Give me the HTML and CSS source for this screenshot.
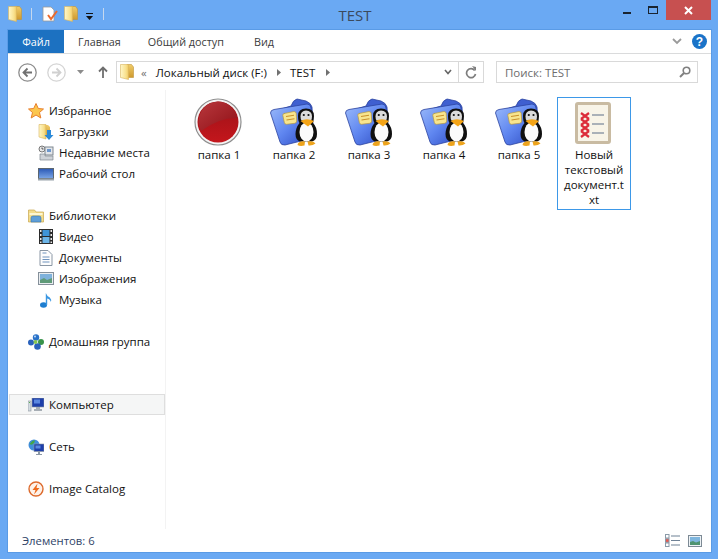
FILE: index.html
```html
<!DOCTYPE html>
<html lang="ru">
<head>
<meta charset="utf-8">
<title>TEST</title>
<link rel="stylesheet" href="styles.css">
</head>
<body>
<svg class="defs" width="0" height="0" aria-hidden="true">
  <defs>
    <linearGradient id="gFolder" x1="0" y1="0" x2="1" y2="0"><stop offset="0" stop-color="#fff7c8"/><stop offset=".7" stop-color="#f8e08c"/><stop offset="1" stop-color="#efc862"/></linearGradient>
    <linearGradient id="gFolderR" x1="0" y1="0" x2="0" y2="1"><stop offset="0" stop-color="#f0cc6a"/><stop offset="1" stop-color="#cf9a2e"/></linearGradient>
    <linearGradient id="gBlue" x1="0" y1="0" x2="1" y2="1"><stop offset="0" stop-color="#9dbcfa"/><stop offset=".5" stop-color="#5f86f0"/><stop offset="1" stop-color="#2c49c0"/></linearGradient>
    <linearGradient id="gRed" x1="0" y1="0" x2="0" y2="1"><stop offset="0" stop-color="#9c1218"/><stop offset="1" stop-color="#c4161c"/></linearGradient>
    <linearGradient id="gRedHi" x1="0" y1="0" x2="1" y2="1"><stop offset="0" stop-color="#b9383d"/><stop offset="1" stop-color="#8e1016"/></linearGradient>
    <linearGradient id="gSmallBlue" x1="0" y1="0" x2="0" y2="1"><stop offset="0" stop-color="#2a58b5"/><stop offset="1" stop-color="#7ba6e6"/></linearGradient>
    <symbol id="winfolder" viewBox="0 0 14 16">
      <path d="M7 .5h4.500l2 2.500v10.500H7z" fill="url(#gFolderR)" stroke="#c0933a" stroke-width=".6"/>
      <path d="M.5.500H8.500V15.500L.5 13.500z" fill="url(#gFolder)" stroke="#d8b45c" stroke-width=".6"/>
    </symbol>
    <symbol id="penguinfolder" viewBox="0 0 48 48">
      <path d="M3 14L22 8Q24 2 28 1L37 3Q42 5 43 9L44 28L14 42z" fill="#3f5fd0" stroke="#2b429f" stroke-width=".8"/>
      <path d="M1.500 15Q1.500 12 5 11.500L38 6Q42 6 42 10L43 37Q43 40 40 41L16 47Q12 47.500 11 44z" fill="url(#gBlue)" stroke="#2b429f" stroke-width=".8"/>
      <path d="M15 15.500l10-2q2 0 2.200 2l.5 7.500q0 2-2 2.300l-8.200 1q-2 0-2.200-2l-1.500-7q0-2 1.700-1.800z" fill="#f7e58f" stroke="#b99a3c" stroke-width=".7"/>
      <path d="M17 18.500l8-1.200M17.500 22l8-1.200" stroke="#c9912c" stroke-width="1.100"/>
      <path d="M37 10.500Q29 10.500 29 18Q29 23 30.500 25Q26.500 30 26.500 36Q26.500 42 31 43.500H43Q48 42 48 36Q48 29 44 25Q45 20 45 18Q45 10.500 37 10.500z" fill="#101010"/>
      <ellipse cx="37.500" cy="34" rx="7" ry="9.500" fill="#fbfbfb"/>
      <path d="M37 12.500Q31.500 13 31.500 18.500Q31.500 21 32.500 22.500H42Q43 21 43 18.500Q43 13 37 12.500z" fill="#dcdcdc"/>
      <circle cx="34.800" cy="17" r="1.100" fill="#111"/><circle cx="39.500" cy="17" r="1.100" fill="#111"/>
      <path d="M31.500 23Q37.500 19.500 45 23L39 28.500z" fill="#f4a416"/>
      <path d="M28.500 47Q29.500 42.500 36 43.500L35.500 47.500Q31 48.500 28.500 47zM38.500 43.500Q44.500 42.500 46.500 45.500Q43.500 48 39.500 47.500z" fill="#eea41c"/>
    </symbol>
  </defs>
</svg>

<div class="window">
  <header class="titlebar">
    <div class="quick">
      <svg width="14" height="16"><use href="#winfolder"/></svg>
      <span class="qa-sep"></span>
      <svg class="qa-doc" width="16" height="16" viewBox="0 0 16 16"><path d="M1 1h8l3 3v11H1z" fill="#fff" stroke="#9a9a9a" stroke-width=".8"/><path d="M6 9l3 4 6-8" fill="none" stroke="#ea6a2c" stroke-width="2"/></svg>
      <svg class="qa-folder2" width="14" height="16"><use href="#winfolder"/></svg>
      <svg class="qa-down" width="7" height="7" viewBox="0 0 7 7"><path d="M0 0h7v1H0zM0 3h7L3.500 7z" fill="#111"/></svg>
      <span class="qa-sep qa-sep2"></span>
    </div>
    <div class="title">TEST</div>
    <div class="caption">
      <span class="cap-btn"><span class="cap-min"></span></span>
      <span class="cap-btn"><span class="cap-max"></span></span>
      <span class="cap-close"><svg width="9" height="9" viewBox="0 0 9 9"><path d="M1 1l7 7M8 1L1 8" stroke="#fff" stroke-width="2"/></svg></span>
    </div>
  </header>

  <main class="frame">
    <nav class="ribbon">
      <span class="tab tab-file">Файл</span>
      <span class="tab tab-home">Главная</span>
      <span class="tab tab-share">Общий доступ</span>
      <span class="tab tab-view">Вид</span>
      <span class="ribbon-end">
        <svg width="10" height="7" viewBox="0 0 10 7"><path d="M1 1l4 4 4-4" fill="none" stroke="#9a9a9a" stroke-width="1.800"/></svg>
        <svg width="15" height="15" viewBox="0 0 15 15"><circle cx="7.500" cy="7.500" r="7.500" fill="#1a73c8"/><text x="7.500" y="12" text-anchor="middle" class="help-q">?</text></svg>
      </span>
    </nav>

    <div class="navbar">
      <svg width="19" height="19" viewBox="0 0 19 19"><circle cx="9.500" cy="9.500" r="8.700" fill="#fff" stroke="#8c8c8c" stroke-width="1.300"/><path d="M14 9.500H6M9.500 5.500l-4 4 4 4" fill="none" stroke="#707070" stroke-width="1.800"/></svg>
      <svg class="nav-fwd" width="19" height="19" viewBox="0 0 19 19"><circle cx="9.500" cy="9.500" r="8.700" fill="#fff" stroke="#d4d4d4" stroke-width="1.300"/><path d="M5 9.500h8M9.500 5.500l4 4-4 4" fill="none" stroke="#d0d0d0" stroke-width="1.800"/></svg>
      <svg class="nav-drop" width="7" height="4" viewBox="0 0 7 4"><path d="M0 0h7L3.500 4z" fill="#8c8c8c"/></svg>
      <svg class="nav-up" width="10" height="12" viewBox="0 0 10 12"><path d="M5 12V2M1 5.500L5 1.500l4 4" fill="none" stroke="#6f6f6f" stroke-width="1.800"/></svg>
      <div class="address">
        <svg width="14" height="16"><use href="#winfolder"/></svg>
        <span class="addr-more">«</span>
        <span class="addr-text">Локальный диск (F:)</span>
        <svg class="crumb" width="4" height="7" viewBox="0 0 4 7"><path d="M0 0l4 3.500L0 7z" fill="#707070"/></svg>
        <span class="addr-text addr-test">TEST</span>
        <svg class="crumb" width="4" height="7" viewBox="0 0 4 7"><path d="M0 0l4 3.500L0 7z" fill="#707070"/></svg>
        <span class="addr-spring"></span>
        <svg class="addr-chev" width="8" height="6" viewBox="0 0 8 6"><path d="M1 1l3 3.500L7 1" fill="none" stroke="#666" stroke-width="1.600"/></svg>
        <span class="addr-refresh">
          <svg width="12" height="13" viewBox="0 0 12 13"><path d="M9.700 4.500A4.500 4.500 0 1 0 10.500 8" fill="none" stroke="#7d7d7d" stroke-width="1.700"/><path d="M7 0l4 1v4z" fill="#7d7d7d"/></svg>
        </span>
      </div>
      <div class="search">
        <span class="search-text">Поиск: TEST</span>
        <svg width="12" height="12" viewBox="0 0 12 12"><circle cx="7.500" cy="4.500" r="3.300" fill="none" stroke="#808080" stroke-width="1.600"/><path d="M5 7l-4 4" stroke="#808080" stroke-width="2"/></svg>
      </div>
    </div>

    <div class="body">
      <aside class="sidebar">
        <section class="group">
          <div class="row root">
            <svg width="16" height="16" viewBox="0 0 16 16"><path d="M8 .5l2.300 5 5.200.5-4 3.500 1.300 5.500L8 12l-4.800 3 1.300-5.500-4-3.500 5.200-.5z" fill="#fbc64e" stroke="#e87f2c"/></svg>
            <span>Избранное</span>
          </div>
          <div class="row child">
            <svg width="16" height="16" viewBox="0 0 16 16"><path d="M6 1h4l2 2v10H6z" fill="url(#gFolderR)"/><path d="M1 .5h7V15l-7-2z" fill="url(#gFolder)" stroke="#d8b45c" stroke-width=".6"/><path d="M9 6h4v5h2.500L11 16l-4.500-5H9z" fill="#2c8ad8"/></svg>
            <span>Загрузки</span>
          </div>
          <div class="row child">
            <svg width="16" height="16" viewBox="0 0 16 16"><circle cx="4" cy="4" r="3" fill="#e8e8e8" stroke="#777"/><path d="M4 2.500V4h1.500" stroke="#555" fill="none"/><rect x="7" y="2" width="8" height="8" fill="#e3e6ea" stroke="#7f8790"/><rect x="9" y="4" width="4" height="3" fill="#6d97cc"/><path d="M2 9h5v2h8v4H2z" fill="#cfd3d8" stroke="#7f8790" stroke-width=".7"/></svg>
            <span>Недавние места</span>
          </div>
          <div class="row child">
            <svg width="16" height="14" viewBox="0 0 16 14"><rect x=".5" y="1.500" width="15" height="10" fill="url(#gSmallBlue)" stroke="#5b6670"/><rect y="11.500" width="16" height="2" fill="#9aa3ab"/></svg>
            <span>Рабочий стол</span>
          </div>
        </section>

        <section class="group">
          <div class="row root">
            <svg width="16" height="16" viewBox="0 0 16 16"><path d="M.5 2h6l1.500 2h7.500v10H.5z" fill="#f4dd8c" stroke="#c8a64e" stroke-width=".7"/><path d="M1.500 5h13v2h-13z" fill="#fff7d2"/><path d="M3 14V10q0-2 2-2h6q2 0 2 2v4z" fill="#5f9fd8" stroke="#3a75ae" stroke-width=".6"/></svg>
            <span>Библиотеки</span>
          </div>
          <div class="row child">
            <svg width="14" height="15" viewBox="0 0 14 15"><rect width="14" height="15" fill="#2b2b2b"/><path d="M3.500 1h7v6h-7z" fill="#3f95d8"/><path d="M3.500 8h7v6h-7z" fill="#6cb5e8"/><path d="M1 1h1.500v2H1zM1 5h1.500v2H1zM1 9h1.500v2H1zM1 12.500h1.500v1.500H1zM11.500 1H13v2h-1.500zM11.500 5H13v2h-1.500zM11.500 9H13v2h-1.500zM11.500 12.500H13v1.500h-1.500z" fill="#e9e9e9"/></svg>
            <span>Видео</span>
          </div>
          <div class="row child">
            <svg width="13" height="16" viewBox="0 0 13 16"><path d="M.5.500h8l4 4v11H.5z" fill="#fdfdfd" stroke="#8a97a5"/><path d="M3 3h4M3 7h7M3 9.500h7M3 12h7" stroke="#6f93bd"/></svg>
            <span>Документы</span>
          </div>
          <div class="row child">
            <svg width="16" height="13" viewBox="0 0 16 13"><rect x=".5" y=".5" width="15" height="12" fill="#e9edf0" stroke="#85909a"/><rect x="2" y="2" width="12" height="9" fill="#7fb2dc"/><path d="M2 11V8l4-2 3 2 5-2v5z" fill="#5f9a78"/></svg>
            <span>Изображения</span>
          </div>
          <div class="row child">
            <svg width="13" height="16" viewBox="0 0 13 16"><ellipse cx="4" cy="13" rx="3.500" ry="2.700" fill="#1e7ed0"/><path d="M6.300 13V1q1 3 4 4.500 2 2 1 4.500-.5-3-3.600-3.500V13z" fill="#3a97e2"/></svg>
            <span>Музыка</span>
          </div>
        </section>

        <section class="group group-wide">
          <div class="row root">
            <svg width="16" height="16" viewBox="0 0 16 16"><circle cx="8" cy="3.500" r="3.200" fill="#2a72c8"/><circle cx="3" cy="8.500" r="3" fill="#2a62bc"/><circle cx="13" cy="8" r="3" fill="#39934a"/><circle cx="9.500" cy="12.500" r="3.300" fill="#2a62bc"/><circle cx="7.500" cy="8" r="2" fill="#86c552"/><circle cx="7" cy="2.500" r="1" fill="#bcd8f7"/></svg>
            <span>Домашняя группа</span>
          </div>
        </section>

        <section class="group">
          <div class="row root row-sel">
            <svg width="16" height="14" viewBox="0 0 16 14"><rect y="3" width="3" height="10" fill="#d3dbe1" stroke="#8a949d" stroke-width=".6"/><rect x="1" y="4" width="1" height="1" fill="#56b04a"/><rect x="4" y="0" width="12" height="9" fill="#1e3faa" stroke="#8a949d" stroke-width=".6"/><rect x="6" y="1.500" width="6" height="4" fill="#5b87e0"/><path d="M8 9h4v2h2v2H6v-2h2z" fill="#a7aeb5"/></svg>
            <span>Компьютер</span>
          </div>
        </section>

        <section class="group">
          <div class="row root">
            <svg width="16" height="16" viewBox="0 0 16 16"><circle cx="6" cy="6" r="5.500" fill="#3f8ddc"/><path d="M1.500 5q2-3 5-4 1 2-1 3.500-1.500 2-4 .5zM6 10q2-3 4-2l-2 3z" fill="#44a648"/><rect x="6" y="5" width="10" height="7.500" fill="#1e3faa" stroke="#8a949d" stroke-width=".6"/><rect x="7.500" y="6.500" width="5" height="3" fill="#5b87e0"/><path d="M10 12.500h2V15h2v1H8v-1h2z" fill="#8b98a6"/></svg>
            <span>Сеть</span>
          </div>
        </section>

        <section class="group">
          <div class="row root">
            <svg width="16" height="16" viewBox="0 0 16 16"><circle cx="8" cy="8" r="7" fill="#fdf2ea" stroke="#dd6a2c" stroke-width="1.400"/><path d="M9.500 2.500L4.500 9h3L6 13.500 11.500 7h-3z" fill="#ee6a1c"/></svg>
            <span>Image Catalog</span>
          </div>
        </section>
      </aside>

      <section class="files">
        <article class="file">
          <svg class="file-icon" width="48" height="48" viewBox="0 0 48 48">
            <circle cx="24" cy="24" r="23" fill="#f4f4f4" stroke="#8f8f8f" stroke-width="1.200"/>
            <circle cx="24" cy="24" r="20.500" fill="url(#gRed)"/>
            <path d="M4.500 24Q6 5 24 3.500 38 4 43.500 20 26 19 7 33 5 29 4.500 24z" fill="url(#gRedHi)"/>
          </svg>
          <span class="file-name">папка 1</span>
        </article>
        <article class="file">
          <svg class="file-icon" width="48" height="48"><use href="#penguinfolder"/></svg>
          <span class="file-name">папка 2</span>
        </article>
        <article class="file">
          <svg class="file-icon" width="48" height="48"><use href="#penguinfolder"/></svg>
          <span class="file-name">папка 3</span>
        </article>
        <article class="file">
          <svg class="file-icon" width="48" height="48"><use href="#penguinfolder"/></svg>
          <span class="file-name">папка 4</span>
        </article>
        <article class="file">
          <svg class="file-icon" width="48" height="48"><use href="#penguinfolder"/></svg>
          <span class="file-name">папка 5</span>
        </article>
        <article class="file file-sel">
          <svg class="file-icon" width="48" height="48" viewBox="0 0 48 48">
            <rect x="7.500" y="5.500" width="33" height="39" rx="1.500" fill="#f8f4e8" stroke="#c9bba2" stroke-width="3"/>
            <path d="M12 15l8 6m0-6l-8 6M12 21l8 6m0-6l-8 6M12 27l8 6m0-6l-8 6M12 33l8 6m0-6l-8 6" stroke="#dc2c3a" stroke-width="2.200" fill="none"/>
            <path d="M23 17h12M23 26h12M23 35h12" stroke="#aab1b8" stroke-width="2"/>
          </svg>
          <span class="file-name">Новый текстовый документ.t<br>xt</span>
        </article>
      </section>
    </div>

    <footer class="status">
      <span>Элементов: 6</span>
      <span class="status-views">
        <svg width="15" height="13" viewBox="0 0 15 13"><path d="M6 2h9M6 6.500h9M6 11h9" stroke="#6f8296" stroke-width="1.200"/><rect x=".5" y=".5" width="3.500" height="3.500" fill="#fff" stroke="#8a9aa8"/><rect x=".5" y="4.800" width="3.500" height="3.500" fill="#e9584e" stroke="#8a9aa8"/><rect x=".5" y="9" width="3.500" height="3.500" fill="#fff" stroke="#8a9aa8"/></svg>
        <svg width="14" height="12" viewBox="0 0 14 12"><rect x=".5" y=".5" width="13" height="11" fill="#eef3f6" stroke="#7d8a95"/><rect x="2" y="2" width="10" height="8" fill="#7fb6de"/><path d="M2 10V7l3-1 3 1.500L12 6v4z" fill="#4f9470"/></svg>
      </span>
    </footer>
  </main>
</div>
</body>
</html>
```

FILE: styles.css
```css
* { box-sizing: border-box; }
html, body { margin: 0; height: 100%; }
body {
  background: #6aa9f3;
  font-family: "Open Sans", "Noto Sans", "Liberation Sans", sans-serif;
  font-size: 11.5px;
  color: #111;
  overflow: hidden;
}
svg { display: block; flex: none; }
.defs { position: absolute; }

.window {
  width: 718px;
  height: 559px;
  display: flex;
  flex-direction: column;
  padding: 0 7px 7px 8px;
}

.titlebar {
  height: 30px;
  flex: none;
  display: grid;
  grid-template-columns: 1fr auto 1fr;
}
.quick { display: flex; align-items: flex-start; padding-top: 6px; }
.qa-sep { width: 1px; height: 12px; margin: 2px 0 0 9px; background: #c6d8ee; }
.qa-sep2 { margin-left: 10px; }
.qa-doc { margin-left: 10px; }
.qa-folder2 { margin-left: 6px; }
.qa-down { margin: 7px 0 0 8px; }
.title { font-size: 15px; line-height: 30px; color: #3a4a5e; margin-right: 9px; }
.caption { display: flex; justify-content: flex-end; align-items: flex-start; }
.cap-btn { width: 26px; height: 20px; display: flex; align-items: center; justify-content: center; }
.cap-min { width: 8px; height: 2px; margin-top: 5px; background: #1a2430; }
.cap-max { width: 10px; height: 8px; margin-top: -1px; border: 1px solid #1a2430; border-top-width: 2px; }
.cap-close {
  width: 45px; height: 20px;
  background: #c75050;
  display: flex; align-items: center; justify-content: center;
}

.frame {
  flex: 1;
  min-height: 0;
  background: #fff;
  display: flex;
  flex-direction: column;
  box-shadow: 0 0 0 1px #5a9be6;
}

.ribbon {
  height: 24px;
  flex: none;
  display: flex;
  align-items: stretch;
  border-bottom: 1px solid #dadbdc;
  font-size: 10.8px;
}
.tab { line-height: 23px; color: #3c3c3c; }
.tab-file { width: 56px; background: #1c71c1; color: #fff; text-align: center; }
.tab-home { margin-left: 14px; }
.tab-share { margin-left: 27px; }
.tab-view { margin-left: 30px; }
.ribbon-end { margin-left: auto; display: flex; align-items: center; gap: 10px; padding-right: 4px; }
.help-q { font: bold 12px "Liberation Sans", sans-serif; fill: #fff; }

.navbar {
  height: 36px;
  flex: none;
  display: flex;
  align-items: center;
  padding: 0 13px 0 10px;
}
.nav-fwd { margin-left: 10px; }
.nav-drop { margin-left: 11px; }
.nav-up { margin-left: 14px; }
.address {
  margin-left: 8px;
  width: 368px;
  height: 22px;
  border: 1px solid #d9d9d9;
  display: flex;
  align-items: center;
  padding-left: 3px;
}
.addr-more { margin-left: 7px; color: #707070; }
.addr-text { margin-left: 9px; }
.addr-test { margin-left: 9px; }
.crumb { margin-left: 10px; }
.addr-test + .crumb { margin-left: 11px; }
.addr-spring { flex: 1; }
.addr-chev { margin-right: 6px; }
.addr-refresh {
  width: 25px; height: 100%;
  border-left: 1px solid #d9d9d9;
  display: flex; align-items: center; justify-content: center;
}
.search {
  margin-left: 12px;
  flex: 1;
  height: 22px;
  border: 1px solid #d9d9d9;
  display: flex;
  align-items: center;
  justify-content: space-between;
  padding: 0 6px 0 8px;
}
.search-text { color: #6d6d6d; }

.body { flex: 1; min-height: 0; display: flex; }

.sidebar {
  width: 158px;
  flex: none;
  padding: 10px 0 0 1px;
  border-right: 1px solid #f3f3f3;
}
.group { margin-bottom: 21px; }
.group-wide { margin-bottom: 42px; }
.row {
  height: 21px;
  display: flex;
  align-items: center;
  white-space: nowrap;
}
.root { padding-left: 19px; }
.child { padding-left: 29px; }
.root svg, .child svg { width: 16px; margin-right: 5px; }
.row-sel { background: #f5f6f6; border: 1px solid #dedede; padding-left: 18px; }

.files {
  flex: 1;
  display: flex;
  align-items: flex-start;
  padding: 7px 0 0 16px;
  gap: 1px;
}
.file {
  width: 74px;
  flex: none;
  display: flex;
  flex-direction: column;
  align-items: center;
  border: 1px solid transparent;
  padding-bottom: 2px;
  text-align: center;
  line-height: 15px;
}
.file-icon { margin: 0 2px 1px 0; }
.file-name { display: block; width: 100%; }
.file-sel { border-color: #3d98e8; }

.status {
  height: 23px;
  flex: none;
  display: flex;
  align-items: center;
  justify-content: space-between;
  padding: 0 9px 0 14px;
  color: #2f4468;
  font-size: 11.3px;
}
.status-views { display: flex; align-items: center; gap: 8px; }
```
